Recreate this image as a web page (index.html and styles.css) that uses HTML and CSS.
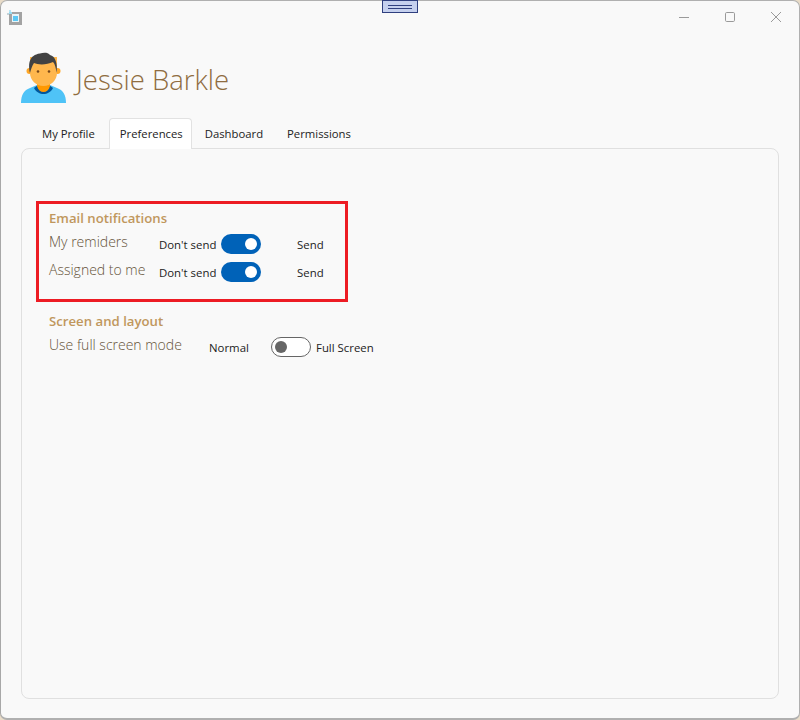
FILE: index.html
```html
<!DOCTYPE html>
<html lang="en">
<head>
<meta charset="utf-8">
<title>Jessie Barkle</title>
<link rel="stylesheet" href="styles.css">
</head>
<body>
<div class="window">
  <div class="grip"><span class="grip-lines"></span></div>
  <div class="titlebar">
    <svg class="app-icon" width="20" height="20" viewBox="0 0 20 20"><rect x="3" y="3" width="13" height="13" fill="#a3a3a3"/><rect x="6" y="5" width="7" height="8" fill="#e8f4f8"/><rect x="7" y="7" width="5" height="5" fill="#5cc8f5"/><rect x="3" y="3" width="3" height="2" fill="#9adcf3"/><rect x="1" y="4" width="2" height="2" fill="#c4d4da"/><rect x="3" y="1" width="2" height="2" fill="#b5e4f5"/></svg>
    <div class="win-controls">
      <svg class="win-btn" width="12" height="12" viewBox="0 0 12 12"><path d="M1 6.5h10" stroke="#9a9a9a" fill="none"/></svg>
      <svg class="win-btn" width="12" height="12" viewBox="0 0 12 12"><rect x="1.5" y="1.5" width="9" height="9" rx="1.2" stroke="#9a9a9a" fill="none"/></svg>
      <svg class="win-btn" width="12" height="12" viewBox="0 0 12 12"><path d="M1 1l10 10M11 1L1 11" stroke="#9a9a9a" fill="none"/></svg>
    </div>
  </div>
  <header class="profile">
    <svg class="avatar" width="46" height="52" viewBox="0 0 46 52">
      <path d="M0 51c0-8 3-13 9-15l7-3h13l7 3c6 2 9 7 9 15z" fill="#4fc3f7"/>
      <path d="M13 36l4-3h11l4 3c-2 4-6 6-9.500 6S15 40 13 36z" fill="#01579b"/>
      <path d="M16 28h13v6c-1 4-3.500 6-6.500 6S17 38 16 34z" fill="#ff9800"/>
      <circle cx="8.500" cy="19" r="3" fill="#ffa726"/>
      <circle cx="36.500" cy="19" r="3" fill="#ffa726"/>
      <path d="M9 5h27v16c0 7-6 13-13.500 13S9 28 9 21z" fill="#ffb74d"/>
      <path d="M9 21C7 12 8 3 19 1.500 22 .5 27 0 29 3c5 1 8 8 6.500 18-.5-5-1.500-9-3.500-11-6 3-15 3-19 1-2 3-3 6-4 10z" fill="#424242"/>
      <circle cx="17" cy="19.500" r="1.300" fill="#784719"/>
      <circle cx="28" cy="19.500" r="1.300" fill="#784719"/>
    </svg>
    <h1 class="name">Jessie Barkle</h1>
  </header>
  <nav class="tabs">
    <span class="tab">My Profile</span>
    <span class="tab tab-active">Preferences</span>
    <span class="tab">Dashboard</span>
    <span class="tab">Permissions</span>
  </nav>
  <main class="panel">
    <section class="group group-marked">
      <h2 class="group-title">Email notifications</h2>
      <div class="row row-email">
        <span class="label">My remiders</span>
        <span class="opt opt-left">Don't send</span>
        <span class="toggle toggle-on"><span class="knob"></span></span>
        <span class="opt opt-send">Send</span>
      </div>
      <div class="row row-email">
        <span class="label">Assigned to me</span>
        <span class="opt opt-left">Don't send</span>
        <span class="toggle toggle-on"><span class="knob"></span></span>
        <span class="opt opt-send">Send</span>
      </div>
    </section>
    <section class="group group-screen">
      <h2 class="group-title">Screen and layout</h2>
      <div class="row row-screen">
        <span class="label">Use full screen mode</span>
        <span class="opt opt-normal">Normal</span>
        <span class="toggle toggle-off"><span class="knob"></span></span>
        <span class="opt">Full Screen</span>
      </div>
    </section>
  </main>
</div>
</body>
</html>
```

FILE: styles.css
```css
* { box-sizing: border-box; }
html, body { margin: 0; height: 100%; }
body {
  background: #e9dcc8;
  font-family: "Open Sans", "Noto Sans", sans-serif;
  overflow: hidden;
}
.window {
  position: relative;
  width: 800px;
  height: 720px;
  background: #f9f9f9;
  border: 1px solid #b0b0b0;
  border-width: 1px 1px 2px 1px;
  border-left-color: #a8a8a8;
  border-radius: 7px;
  display: flex;
  flex-direction: column;
}
.grip {
  position: absolute;
  top: -1px;
  left: 381px;
  width: 36px;
  height: 13px;
  background: #c5d0ee;
  border: 1px solid #2f3f7f;
  display: flex;
  align-items: center;
  justify-content: center;
}
.grip-lines {
  width: 24px;
  height: 4px;
  border-top: 1px solid #2f3f7f;
  border-bottom: 1px solid #2f3f7f;
}
.titlebar {
  height: 32px;
  display: flex;
  justify-content: space-between;
  align-items: flex-start;
  flex: none;
}
.app-icon { margin: 8px 0 0 5px; }
.win-controls {
  display: flex;
  gap: 34px;
  margin: 10px 17px 0 0;
}
.win-btn { display: block; }
.profile {
  display: flex;
  align-items: center;
  gap: 9px;
  margin: 19px 0 0 20px;
  height: 52px;
  flex: none;
}
.avatar { display: block; }
.name {
  margin: 4px 0 0;
  font-size: 27.500px;
  font-weight: 300;
  color: #8f6c40;
  line-height: 36px;
}
.tabs {
  display: flex;
  margin: 14px 0 0 20px;
  padding-left: 9px;
  height: 31px;
  position: relative;
  z-index: 1;
  flex: none;
}
.tab {
  display: flex;
  align-items: center;
  height: 31px;
  padding: 0 11px 2px;
  font-size: 11.300px;
  color: #222;
  border: 1px solid transparent;
  border-bottom: 0;
  border-radius: 4px 4px 0 0;
}
.tab-active {
  margin: 0 1px 0 2px;
  padding: 0 8px 2px 10px;
  background: #fff;
  border-color: #e2e2e2;
}
.panel {
  flex: none;
  margin: -1px 0 0 20px;
  width: 758px;
  height: 551px;
  background: #f9f9f9;
  border: 1px solid #e0e0e0;
  border-radius: 8px;
  padding: 52px 0 0 14px;
}
.group-marked {
  width: 312px;
  height: 101px;
  border: 3px solid #ed1c24;
  padding: 5px 0 0 10px;
}
.group-screen { padding: 10px 0 0 13px; }
.group-title {
  margin: 0;
  font-size: 13.200px;
  font-weight: 600;
  line-height: 18px;
  color: #c0975d;
}
.row {
  display: flex;
  align-items: center;
  height: 28px;
}
.group-title + .row-email { margin-top: 3px; }
.label {
  font-size: 14px;
  font-weight: 300;
  color: #655339;
  width: 110px;
  flex: none;
  white-space: nowrap;
  position: relative;
  top: -3px;
}
.opt {
  font-size: 11.400px;
  color: #222;
  white-space: nowrap;
}
.opt-left { width: 57px; margin-right: 5px; }
.opt-send { margin-left: 36px; }
.row-screen { margin-top: 3px; }
.row-screen .label { width: 160px; }
.opt-normal { width: 62px; }
.row-screen .toggle { margin-right: 5px; }
.toggle {
  width: 40px;
  height: 20px;
  border-radius: 10px;
  display: flex;
  align-items: center;
  flex: none;
  padding: 0 4px;
}
.toggle-on {
  background: #0062b8;
  justify-content: flex-end;
}
.toggle-on .knob { background: #fff; }
.toggle-off {
  background: #fff;
  border: 1px solid #666;
  padding: 0 3px;
}
.toggle-off .knob { background: #666; }
.knob {
  width: 12px;
  height: 12px;
  border-radius: 50%;
  display: block;
}
```
